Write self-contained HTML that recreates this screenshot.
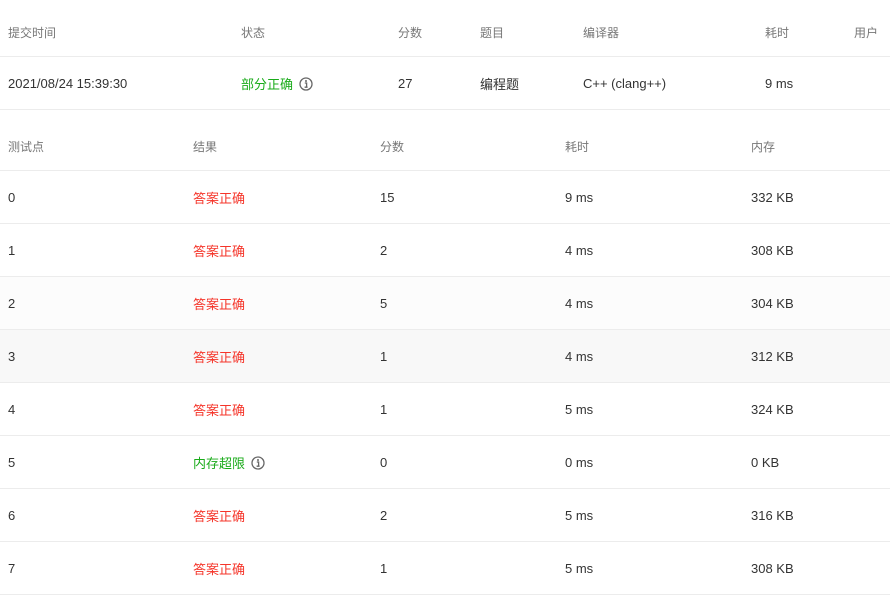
<!DOCTYPE html>
<html><head><meta charset="utf-8"><style>
*{margin:0;padding:0;box-sizing:border-box}
body{width:890px;height:591px;overflow:hidden;background:#fff;font-family:"Liberation Sans","Noto Sans CJK SC",sans-serif;color:#333;font-size:13px}
.r{position:absolute;left:0;width:890px;border-bottom:1px solid #ececec}
.r span{position:absolute;top:2px;bottom:0;display:flex;align-items:center;white-space:nowrap;line-height:16px}
.r span b{font-weight:normal;font-family:"Noto Sans CJK SC",sans-serif;line-height:16px;display:block}
.h span{color:#777;font-size:12px;font-family:"Noto Sans CJK SC",sans-serif}
.red{color:#f5352a}
.grn{color:#1aab1a}
svg{margin-left:6px;display:block}
</style></head><body>
<svg width="0" height="0" style="position:absolute"><defs><g id="ic"><circle cx="7" cy="7" r="6" fill="none" stroke="#666" stroke-width="1.3"/><circle cx="7" cy="4" r="1" fill="#666"/><path d="M5.8 6h1.8v4.2M5.6 10.2h3" fill="none" stroke="#666" stroke-width="1.3"/></g></defs></svg>
<div class="r h" style="top:8px;height:49px"><span style="left:8px">提交时间</span><span style="left:241px">状态</span><span style="left:398px">分数</span><span style="left:480px">题目</span><span style="left:583px">编译器</span><span style="left:765px">耗时</span><span style="left:854px">用户</span></div>
<div class="r" style="top:57px;height:53px"><span style="left:8px">2021/08/24 15:39:30</span><span style="left:241px" class="grn"><b>部分正确</b><svg width="14" height="14"><use href="#ic"/></svg></span><span style="left:398px">27</span><span style="left:480px"><b>编程题</b></span><span style="left:583px">C++ (clang++)</span><span style="left:765px">9 ms</span></div>
<div class="r h" style="top:122px;height:49px"><span style="left:8px">测试点</span><span style="left:193px">结果</span><span style="left:380px">分数</span><span style="left:565px">耗时</span><span style="left:751px">内存</span></div>
<div class="r" style="top:171px;height:53px"><span style="left:8px">0</span><span style="left:193px" class="red"><b>答案正确</b></span><span style="left:380px">15</span><span style="left:565px">9 ms</span><span style="left:751px">332 KB</span></div>
<div class="r" style="top:224px;height:53px"><span style="left:8px">1</span><span style="left:193px" class="red"><b>答案正确</b></span><span style="left:380px">2</span><span style="left:565px">4 ms</span><span style="left:751px">308 KB</span></div>
<div class="r" style="top:277px;height:53px;background:#fcfcfc"><span style="left:8px">2</span><span style="left:193px" class="red"><b>答案正确</b></span><span style="left:380px">5</span><span style="left:565px">4 ms</span><span style="left:751px">304 KB</span></div>
<div class="r" style="top:330px;height:53px;background:#f8f8f8"><span style="left:8px">3</span><span style="left:193px" class="red"><b>答案正确</b></span><span style="left:380px">1</span><span style="left:565px">4 ms</span><span style="left:751px">312 KB</span></div>
<div class="r" style="top:383px;height:53px"><span style="left:8px">4</span><span style="left:193px" class="red"><b>答案正确</b></span><span style="left:380px">1</span><span style="left:565px">5 ms</span><span style="left:751px">324 KB</span></div>
<div class="r" style="top:436px;height:53px"><span style="left:8px">5</span><span style="left:193px" class="grn"><b>内存超限</b><svg width="14" height="14"><use href="#ic"/></svg></span><span style="left:380px">0</span><span style="left:565px">0 ms</span><span style="left:751px">0 KB</span></div>
<div class="r" style="top:489px;height:53px"><span style="left:8px">6</span><span style="left:193px" class="red"><b>答案正确</b></span><span style="left:380px">2</span><span style="left:565px">5 ms</span><span style="left:751px">316 KB</span></div>
<div class="r" style="top:542px;height:53px"><span style="left:8px">7</span><span style="left:193px" class="red"><b>答案正确</b></span><span style="left:380px">1</span><span style="left:565px">5 ms</span><span style="left:751px">308 KB</span></div>
</body></html>
